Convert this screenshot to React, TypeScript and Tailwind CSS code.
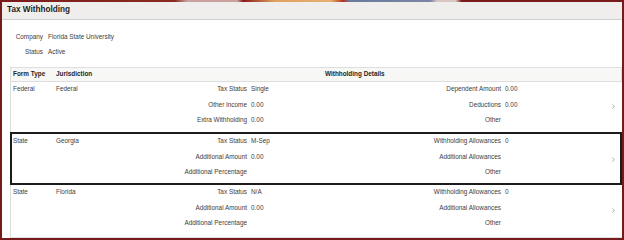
import { ChevronRight } from "lucide-react";

type Line = { label: string; value: string; label2: string; value2: string };

type Row = {
  formType: string;
  jurisdiction: string;
  lines: Line[];
  selected?: boolean;
};

const rows: Row[] = [
  {
    formType: "Federal",
    jurisdiction: "Federal",
    lines: [
      { label: "Tax Status", value: "Single", label2: "Dependent Amount", value2: "0.00" },
      { label: "Other Income", value: "0.00", label2: "Deductions", value2: "0.00" },
      { label: "Extra Withholding", value: "0.00", label2: "Other", value2: "" },
    ],
  },
  {
    formType: "State",
    jurisdiction: "Georgia",
    selected: true,
    lines: [
      { label: "Tax Status", value: "M-Sep", label2: "Withholding Allowances", value2: "0" },
      { label: "Additional Amount", value: "0.00", label2: "Additional Allowances", value2: "" },
      { label: "Additional Percentage", value: "", label2: "Other", value2: "" },
    ],
  },
  {
    formType: "State",
    jurisdiction: "Florida",
    lines: [
      { label: "Tax Status", value: "N/A", label2: "Withholding Allowances", value2: "0" },
      { label: "Additional Amount", value: "0.00", label2: "Additional Allowances", value2: "" },
      { label: "Additional Percentage", value: "", label2: "Other", value2: "" },
    ],
  },
];

function WithholdingRow({ row, last }: { row: Row; last: boolean }) {
  const frame = row.selected
    ? "h-[53px] pt-[2px] pl-[1px] shadow-[inset_0_0_0_2px_#1c1c1c]"
    : last
      ? "h-[53px] border-l border-b border-[#dedede]"
      : "h-[50px] border-l border-[#dedede]";

  return (
    <div className={`flex ${frame}`}>
      <div className="grid grid-cols-[45px_94px_97px_154px_100px_95px] auto-rows-[15.5px] items-center">
        {row.lines.map((l, i) => (
          <div key={i} className="contents">
            <div className="pl-[2px]">{i === 0 ? row.formType : ""}</div>
            <div>{i === 0 ? row.jurisdiction : ""}</div>
            <div className="text-right">{l.label}</div>
            <div className="pl-[4px]">{l.value}</div>
            <div className="text-right">{l.label2}</div>
            <div className="pl-[4px]">{l.value2}</div>
          </div>
        ))}
      </div>
      <div className="flex flex-1 items-center pl-[14px]">
        <ChevronRight className="h-[7px] w-[7px] text-[#858585]" strokeWidth={2.4} />
      </div>
    </div>
  );
}

export default function App() {
  return (
    <div className="flex h-[240px] w-[624px] flex-col bg-[#761b1b] font-['Liberation_Sans',Arial,sans-serif]">
      <div className="h-[1.5px] bg-[linear-gradient(90deg,#7a1b1b_0%,#8a2a22_28%,#c9a2a0_30%,#c9a2a0_38%,#8b1a1a_39%,#e0a060_44%,#e6b070_53%,#b83020_55%,#6a7a9c_56%,#7a86a4_69%,#d9c6c0_70%,#d9c6c0_73%,#7a1b1b_74%,#7a1b1b_100%)]" />
      <div className="mx-[2px] mb-[2px] flex flex-1 flex-col bg-white">
        <div className="flex h-[18.5px] items-center border-b border-[#cfcfcf] bg-[#efeeec] pl-[5px] text-[8.2px] font-bold text-[#1f1f1f]">
          Tax Withholding
        </div>

        <div className="pl-[8px] text-[6.4px] text-[#404040]">
          <div className="grid grid-cols-[33px_1fr] auto-rows-[15px] items-center gap-x-[5px] pt-[9.5px]">
            <div className="text-right">Company</div>
            <div>Florida State University</div>
            <div className="text-right">Status</div>
            <div>Active</div>
          </div>

          <div className="mt-[7px]">
            <div className="flex h-[15px] items-center border border-[#dedede] bg-[#f7f7f5] font-bold text-[#1f1f1f]">
              <div className="w-[45px] pl-[2px]">Form Type</div>
              <div className="w-[94px]">Jurisdiction</div>
              <div className="pl-[175px]">Withholding Details</div>
            </div>
            {rows.map((r, i) => (
              <WithholdingRow key={i} row={r} last={i === rows.length - 1} />
            ))}
          </div>
        </div>
      </div>
    </div>
  );
}
